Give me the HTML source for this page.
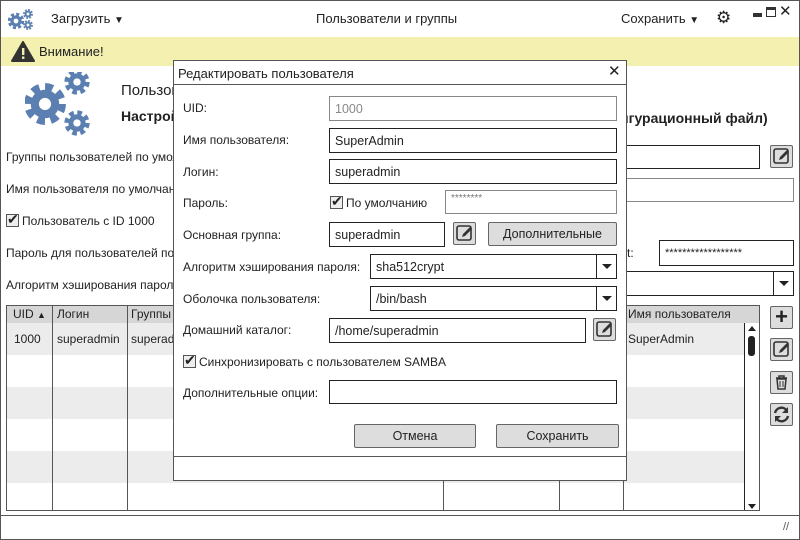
<!DOCTYPE html>
<html><head><meta charset="utf-8"><style>
*{box-sizing:border-box;margin:0;padding:0}
body{width:800px;height:540px;overflow:hidden;background:#fff;font-family:"Liberation Sans",sans-serif;font-size:12px;color:#222;position:relative}
.a{position:absolute}
.in{position:absolute;border:1px solid #222;background:#fff;padding:0 5px;font-size:12.5px;display:flex;align-items:center}
.ig{border-color:#888}
.btn{position:absolute;border:1px solid #666;background:#ddd;border-radius:2px;text-align:center;line-height:22px;font-size:12.5px}
.dd{position:absolute;width:20px;border-left:1px solid #222;right:0;top:0;bottom:0;background:#fff}
.dd:after{content:"";position:absolute;left:5px;top:9px;border:5px solid transparent;border-top:5px solid #222;border-bottom:0}
.cb{display:inline-block;width:13px;height:13px;border:1px solid #555;background:#eee;position:relative;vertical-align:-2px;margin-right:3px}
.cb:after{content:"✔";position:absolute;left:0;top:-4px;font-size:14px;color:#222}
.ibtn{position:absolute;width:23px;height:23px;border:1px solid #666;background:#ddd;border-radius:2px}
</style></head><body>
<svg width="0" height="0" style="position:absolute"><defs>
<g id="gear"><circle r="8" fill="none" stroke="#5a7fb0" stroke-width="6" stroke-dasharray="3.6 2.68"/><circle r="7.5" fill="#5a7fb0"/><circle r="3.2" fill="#fff"/></g>
<g id="pen"><rect x="3" y="3" width="14" height="14" rx="2" fill="none" stroke="#333" stroke-width="1.6"/><path d="M8 14 L9 11 L16 4 L18 6 L11 13 Z" fill="#333"/></g>
</defs></svg>
<div class="a" style="left:0;top:0;width:800px;height:38px;border:1px solid #555"></div>
<svg class="a" style="left:8px;top:8px" width="26" height="22"><g transform="translate(8,13) scale(0.75)"><use href="#gear"/></g><g transform="translate(20,6) scale(0.45)"><use href="#gear"/></g><g transform="translate(20,17) scale(0.45)"><use href="#gear"/></g></svg>
<div class="a" style="left:51px;top:11px;font-size:13px">Загрузить <span style="font-size:10px">▼</span></div>
<div class="a" style="left:316px;top:11px;font-size:13px">Пользователи и группы</div>
<div class="a" style="left:621px;top:11px;font-size:13px">Сохранить <span style="font-size:10px">▼</span></div>
<div class="a" style="left:716px;top:8px;font-size:17px">⚙</div>
<div class="a" style="left:753px;top:13px;width:9px;height:4px;background:#333"></div>
<div class="a" style="left:766px;top:7px;width:10px;height:10px;border:1.5px solid #333;border-top-width:3px"></div>
<div class="a" style="left:779px;top:2px;font-size:15px">✕</div>
<div class="a" style="left:0;top:37px;width:800px;height:29px;background:#f3f0b0;border-left:1px solid #555;border-right:1px solid #555"></div>
<svg class="a" style="left:11px;top:41px" width="24" height="21"><path d="M12 1 L23 20 L1 20 Z" fill="#333" stroke="#333" stroke-linejoin="round" stroke-width="2"/><rect x="11" y="7" width="2.4" height="7" fill="#f3f0b0"/><rect x="11" y="15.5" width="2.4" height="2.4" fill="#f3f0b0"/></svg>
<div class="a" style="left:39px;top:44px;font-size:13px">Внимание!</div>
<div class="a" style="left:0;top:66px;width:800px;height:474px;border-left:1px solid #555;border-right:1px solid #555;border-bottom:1px solid #555"></div>
<svg class="a" style="left:25px;top:72px" width="70" height="66"><g transform="translate(20,32) scale(1.9)"><use href="#gear"/></g><g transform="translate(52,10) scale(1.15)"><use href="#gear"/></g><g transform="translate(52,51) scale(1.15)"><use href="#gear"/></g></svg>
<div class="a" style="left:121px;top:82px;font-size:15px">Пользователи</div>
<div class="a" style="left:121px;top:108px;font-size:14px;font-weight:bold">Настройки</div>
<div class="a" style="left:620px;top:110px;font-size:14px;font-weight:bold">игурационный файл)</div>
<div class="a" style="left:6px;top:150px">Группы пользователей по умолчанию</div>
<div class="in" style="left:600px;top:145px;width:160px;height:24px"></div>
<svg class="ibtn" style="left:770px;top:145px" viewBox="0 0 21 21"><use href="#pen"/></svg>
<div class="a" style="left:6px;top:182px">Имя пользователя по умолчанию</div>
<div class="in ig" style="left:600px;top:178px;width:194px;height:24px"></div>
<div class="a" style="left:6px;top:214px"><span class="cb"></span>Пользователь с ID 1000</div>
<div class="a" style="left:6px;top:246px">Пароль для пользователей по умолчанию</div>
<div class="a" style="left:627px;top:246px">t:</div>
<div class="in" style="left:659px;top:240px;width:135px;height:26px;font-size:11px">******************</div>
<div class="a" style="left:6px;top:278px">Алгоритм хэширования пароля</div>
<div class="in" style="left:600px;top:271px;width:194px;height:25px"><div class="dd"></div></div>
<div class="a" style="left:6px;top:305px;width:754px;height:206px;border:1px solid #555;overflow:hidden">
<div class="a" style="left:0;top:0;width:754px;height:17px;background:#d6d6d6"></div>
<div class="a" style="left:0;top:17px;width:754px;height:32px;background:#ececec"></div>
<div class="a" style="left:0;top:81px;width:754px;height:32px;background:#ececec"></div>
<div class="a" style="left:0;top:145px;width:754px;height:32px;background:#ececec"></div>
<div class="a" style="left:45px;top:0;width:1px;height:206px;background:#555"></div>
<div class="a" style="left:120px;top:0;width:1px;height:206px;background:#555"></div>
<div class="a" style="left:436px;top:0;width:1px;height:206px;background:#555"></div>
<div class="a" style="left:552px;top:0;width:1px;height:206px;background:#555"></div>
<div class="a" style="left:616px;top:0;width:1px;height:206px;background:#555"></div>
<div class="a" style="left:6px;top:1px">UID <span style="font-size:9px">▲</span></div>
<div class="a" style="left:50px;top:1px">Логин</div>
<div class="a" style="left:124px;top:1px">Группы</div>
<div class="a" style="left:621px;top:1px">Имя пользователя</div>
<div class="a" style="left:7px;top:26px">1000</div>
<div class="a" style="left:50px;top:26px">superadmin</div>
<div class="a" style="left:124px;top:26px">superadmin</div>
<div class="a" style="left:621px;top:26px">SuperAdmin</div>
<div class="a" style="left:737px;top:17px;width:16px;height:188px;border-left:1px solid #222;background:#fff"></div>
<div class="a" style="left:741px;top:20px;border:4px solid transparent;border-bottom:5px solid #222;border-top:0"></div>
<div class="a" style="left:741px;top:30px;width:7px;height:20px;border-radius:3px;background:#222"></div>
<div class="a" style="left:741px;top:198px;border:4px solid transparent;border-top:5px solid #222;border-bottom:0"></div>
</div>
<div class="ibtn" style="left:770px;top:306px;font-size:22px;font-weight:bold;text-align:center;line-height:20px">+</div>
<svg class="ibtn" style="left:770px;top:338px" viewBox="0 0 21 21"><use href="#pen"/></svg>
<svg class="ibtn" style="left:770px;top:371px" viewBox="0 0 21 21"><path d="M5 6h11M8 6V4h5v2M6 7h9l-1 10H7z" fill="none" stroke="#333" stroke-width="1.5"/><path d="M9 9v6M12 9v6" stroke="#333"/></svg>
<svg class="ibtn" style="left:770px;top:403px" viewBox="0 0 21 21"><path d="M4 9a6.5 6.5 0 0 1 12-2M17 12a6.5 6.5 0 0 1-12 2" fill="none" stroke="#333" stroke-width="2.4"/><path d="M17 3v6h-6zM4 18v-6h6z" fill="#333"/></svg>
<div class="a" style="left:0;top:515px;width:800px;height:1px;background:#555"></div>
<div class="a" style="left:783px;top:521px;font-size:11px;color:#555">//</div>
<div class="a" style="left:173px;top:60px;width:454px;height:421px;border:1px solid #555;background:#fff"></div>
<div class="a" style="left:173px;top:84px;width:454px;height:1px;background:#555"></div>
<div class="a" style="left:178px;top:66px;font-size:13px">Редактировать пользователя</div>
<div class="a" style="left:608px;top:62px;font-size:15px">✕</div>
<div class="a" style="left:173px;top:456px;width:454px;height:1px;background:#555"></div>
<div class="a" style="left:183px;top:101px">UID:</div>
<div class="in ig" style="left:329px;top:96px;width:288px;height:25px;color:#888">1000</div>
<div class="a" style="left:183px;top:133px">Имя пользователя:</div>
<div class="in" style="left:329px;top:128px;width:288px;height:25px">SuperAdmin</div>
<div class="a" style="left:183px;top:165px">Логин:</div>
<div class="in" style="left:329px;top:159px;width:288px;height:25px">superadmin</div>
<div class="a" style="left:183px;top:196px">Пароль:</div>
<div class="a" style="left:330px;top:196px"><span class="cb"></span>По умолчанию</div>
<div class="in ig" style="left:445px;top:190px;width:172px;height:24px;font-size:10px;color:#777;align-items:flex-start;padding-top:2px">********</div>
<div class="a" style="left:183px;top:228px">Основная группа:</div>
<div class="in" style="left:329px;top:222px;width:116px;height:25px">superadmin</div>
<svg class="ibtn" style="left:453px;top:222px" viewBox="0 0 21 21"><use href="#pen"/></svg>
<div class="btn" style="left:488px;top:222px;width:129px;height:24px">Дополнительные</div>
<div class="a" style="left:183px;top:260px">Алгоритм хэширования пароля:</div>
<div class="in" style="left:370px;top:254px;width:247px;height:25px">sha512crypt<div class="dd"></div></div>
<div class="a" style="left:183px;top:292px">Оболочка пользователя:</div>
<div class="in" style="left:370px;top:286px;width:247px;height:25px">/bin/bash<div class="dd"></div></div>
<div class="a" style="left:183px;top:323px">Домашний каталог:</div>
<div class="in" style="left:329px;top:318px;width:257px;height:25px">/home/superadmin</div>
<svg class="ibtn" style="left:593px;top:318px" viewBox="0 0 21 21"><use href="#pen"/></svg>
<div class="a" style="left:183px;top:355px"><span class="cb"></span>Синхронизировать с пользователем SAMBA</div>
<div class="a" style="left:183px;top:386px">Дополнительные опции:</div>
<div class="in" style="left:329px;top:380px;width:288px;height:24px"></div>
<div class="btn" style="left:354px;top:424px;width:122px;height:24px">Отмена</div>
<div class="btn" style="left:496px;top:424px;width:123px;height:24px">Сохранить</div>
</body></html>
